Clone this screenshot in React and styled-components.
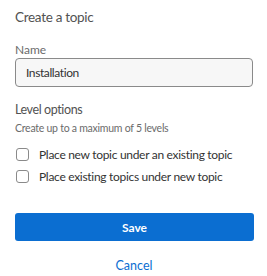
import styled, { createGlobalStyle } from "styled-components";

const GlobalStyle = createGlobalStyle`
  body {
    margin: 0;
    background: #ffffff;
    font-family: Lato, "Liberation Sans", sans-serif;
  }
`;

const Panel = styled.div`
  width: 267px;
  box-sizing: border-box;
  padding: 7px 14px 0 15px;
  display: flex;
  flex-direction: column;
`;

const Title = styled.h2`
  margin: 0;
  font-size: 13.5px;
  line-height: 20px;
  letter-spacing: -0.3px;
  font-weight: 400;
  color: #525252;
`;

const Label = styled.label`
  display: block;
  margin-top: 15px;
  font-size: 12px;
  line-height: 16px;
  color: #6b6b6b;
`;

const TextInput = styled.input`
  margin-top: 0;
  box-sizing: border-box;
  width: 238px;
  height: 29px;
  padding: 0 10px;
  border: 1px solid #8a8a8a;
  border-radius: 4px;
  background: #f7f7f7;
  font-family: inherit;
  font-size: 12px;
  letter-spacing: -0.4px;
  color: #333;
  outline: none;
`;

const Section = styled.div`
  margin-top: 14px;
  font-size: 12.5px;
  line-height: 18px;
  letter-spacing: -0.4px;
  color: #525252;
`;

const Hint = styled.div`
  margin-top: 2px;
  font-size: 10.5px;
  line-height: 14px;
  letter-spacing: -0.25px;
  color: #6b6b6b;
`;

const Options = styled.div`
  margin-top: 10px;
  display: flex;
  flex-direction: column;
  gap: 4px;
`;

const Option = styled.label`
  display: flex;
  align-items: center;
  gap: 10px;
  height: 18px;
  padding-left: 1px;
  font-size: 12px;
  letter-spacing: -0.3px;
  white-space: nowrap;
  color: #333;
`;

const Box = styled.span`
  box-sizing: border-box;
  width: 13px;
  height: 13px;
  border: 1px solid #8a8a8a;
  border-radius: 3px;
  background: #fff;
  flex: none;
`;

const SaveButton = styled.button`
  margin-top: 28px;
  box-sizing: border-box;
  width: 239px;
  height: 28px;
  border: none;
  border-radius: 3px;
  background: #0b6ed1;
  color: #fff;
  font-family: inherit;
  font-size: 12px;
  font-weight: 700;
`;

const CancelLink = styled.button`
  margin-top: 17px;
  align-self: center;
  background: none;
  border: none;
  padding: 0;
  font-family: inherit;
  font-size: 12.5px;
  line-height: 16px;
  color: #0b6ed1;
`;

export default function App() {
  return (
    <>
      <GlobalStyle />
      <Panel>
        <Title>Create a topic</Title>
        <Label>Name</Label>
        <TextInput defaultValue="Installation" />
        <Section>Level options</Section>
        <Hint>Create up to a maximum of 5 levels</Hint>
        <Options>
          <Option>
            <Box />
            Place new topic under an existing topic
          </Option>
          <Option>
            <Box />
            Place existing topics under new topic
          </Option>
        </Options>
        <SaveButton>Save</SaveButton>
        <CancelLink>Cancel</CancelLink>
      </Panel>
    </>
  );
}
